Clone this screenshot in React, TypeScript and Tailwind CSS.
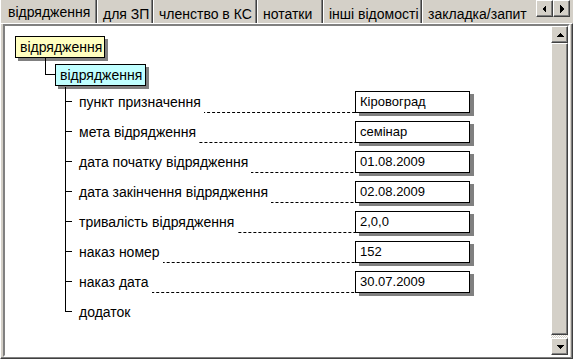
import React from 'react'

// Win9x-style tab page: "відрядження" tree with attribute rows and value boxes.

const tabs = [
  { label: 'відрядження', w: 'w-[97px]', active: true },
  { label: 'для ЗП', w: 'w-[56px]' },
  { label: 'членство в КС', w: 'w-[104px]' },
  { label: 'нотатки', w: 'w-[66px]' },
  { label: 'інші відомості', w: 'w-[99px]' },
  { label: 'закладка/запит', w: 'w-[130px]' },
]

const rows: { label: string; value?: string }[] = [
  { label: 'пункт призначення', value: 'Кіровоград' },
  { label: 'мета відрядження', value: 'семінар' },
  { label: 'дата початку відрядження', value: '01.08.2009' },
  { label: 'дата закінчення відрядження', value: '02.08.2009' },
  { label: 'тривалість відрядження', value: '2,0,0' },
  { label: 'наказ номер', value: '152' },
  { label: 'наказ дата', value: '30.07.2009' },
  { label: 'додаток' },
]

function Arrow({ dir }: { dir: 'left' | 'right' | 'up' | 'down' }) {
  const pts = {
    left: '5,0 5,8 1,4',
    right: '2,0 2,8 6,4',
    up: '0,6 8,6 4,2',
    down: '0,2 8,2 4,6',
  }[dir]
  return (
    <svg width="8" height="8" viewBox="0 0 8 8" shapeRendering="crispEdges">
      <polygon points={pts} fill="#000" />
    </svg>
  )
}

function RaisedButton({ dir }: { dir: 'left' | 'right' | 'up' | 'down' }) {
  return (
    <div className="flex h-[17px] w-[17px] items-center justify-center border-t border-l border-t-white border-l-white border-r border-b border-r-[#404040] border-b-[#404040] bg-[#d4d0c8] shadow-[inset_-1px_-1px_0_#808080]">
      <Arrow dir={dir} />
    </div>
  )
}

export default function App() {
  return (
    <div className="flex h-[359px] w-[573px] flex-col overflow-hidden bg-[#d4d0c8] font-['Liberation_Sans',Arial,sans-serif] text-[14px] leading-[16px] text-black">
      {/* tab strip */}
      <div className="flex h-[23px] items-start">
        <div className="flex w-[536px] items-start overflow-hidden">
          {tabs.map((t) =>
            t.active ? (
              <div
                key={t.label}
                className={`${t.w} relative z-10 -mb-[3px] flex h-[26px] shrink-0 border-l border-l-white border-r border-r-[#404040] bg-[#d4d0c8] pl-[7px] pt-[4px] shadow-[inset_-1px_0_0_#808080]`}
              >
                {t.label}
              </div>
            ) : (
              <div
                key={t.label}
                className={`${t.w} flex h-[23px] shrink-0 whitespace-nowrap border-l border-l-white border-r border-r-[#404040] pl-[5px] pt-[6px] shadow-[inset_-1px_0_0_#808080]`}
              >
                {t.label}
              </div>
            ),
          )}
        </div>
        <RaisedButton dir="left" />
        <RaisedButton dir="right" />
      </div>

      {/* tab page */}
      <div className="flex flex-1 flex-col border-t border-l border-t-white border-l-white border-r border-b border-r-[#404040] border-b-[#404040] px-[2px] pb-[1px] shadow-[inset_-1px_-1px_0_#808080]">
        <div className="flex flex-1 border-t-2 border-l-2 border-t-[#808080] border-l-[#808080] border-r-2 border-b-2 border-r-white border-b-white">
          {/* diagram */}
          <div className="flex-1 bg-white">
            <div className="ml-[10px] mt-[10px] flex h-[22px] w-[90px] items-center border border-black bg-[#ffffc0] px-[4px] shadow-[3px_3px_0_#808080]">
              відрядження
            </div>
            <div className="ml-[40px] flex items-start">
              <div className="h-[17px] w-[10px] border-l border-b border-black" />
              <div className="mt-[6px] flex h-[22px] w-[91px] items-center border border-black bg-[#c0ffff] px-[4px] shadow-[3px_3px_0_#808080]">
                відрядження
              </div>
            </div>
            <div className="ml-[60px] mt-px flex flex-col">
              {rows.map((r, i) => {
                const last = i === rows.length - 1
                return (
                  <div key={r.label} className="flex h-[30px]">
                    <div className="flex w-[7px] flex-col">
                      <div className="h-[15px] border-l border-b border-black" />
                      {!last && <div className="flex-1 border-l border-black" />}
                    </div>
                    <div className="ml-[7px] flex w-[391px] items-center">
                      <span className="whitespace-nowrap">{r.label}</span>
                      {r.value && (
                        <>
                          <div className="ml-[3px] h-[22px] flex-1 bg-[linear-gradient(to_right,#000_3px,transparent_3px)] bg-[length:5px_1px] bg-bottom bg-repeat-x" />
                          <div className="flex h-[22px] w-[115px] items-center border border-black bg-white px-[4px] text-[13px] shadow-[4px_3px_0_#808080]">
                            {r.value}
                          </div>
                        </>
                      )}
                    </div>
                  </div>
                )
              })}
            </div>
          </div>

          {/* scrollbar */}
          <div className="flex w-[17px] flex-col bg-[#d4d0c8]">
            <RaisedButton dir="up" />
            <div className="flex-1 border-t border-l border-t-white border-l-white border-r border-b border-r-[#404040] border-b-[#404040] shadow-[inset_-1px_-1px_0_#808080]" />
            <div className="h-[3px] bg-[repeating-conic-gradient(#ffffff_0_25%,#d4d0c8_0_50%)] bg-[length:2px_2px]" />
            <RaisedButton dir="down" />
          </div>
        </div>
      </div>
    </div>
  )
}
